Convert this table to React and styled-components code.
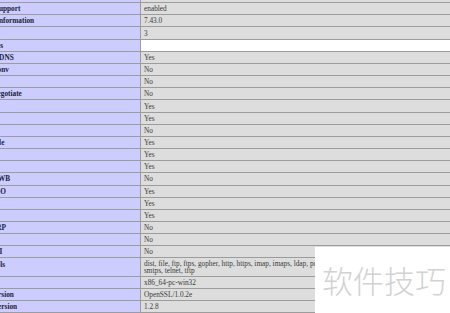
import React from 'react'
import styled, { createGlobalStyle } from 'styled-components'

const GlobalStyle = createGlobalStyle`
  html, body {
    margin: 0;
    padding: 0;
    background: #ffffff;
    overflow: hidden;
  }
  body {
    width: 450px;
    height: 313px;
    position: relative;
  }
`

const rows = [
  { label: '', value: '' },
  { label: 'cURL support', value: 'enabled' },
  { label: 'cURL Information', value: '7.43.0' },
  { label: 'Age', value: '3' },
  { label: 'Features', value: '', blank: true },
  { label: 'AsynchDNS', value: 'Yes' },
  { label: 'CharConv', value: 'No' },
  { label: 'Debug', value: 'No' },
  { label: 'GSS-Negotiate', value: 'No' },
  { label: 'IDN', value: 'Yes' },
  { label: 'IPv6', value: 'Yes' },
  { label: 'krb4', value: 'No' },
  { label: 'Largefile', value: 'Yes' },
  { label: 'libz', value: 'Yes' },
  { label: 'NTLM', value: 'Yes' },
  { label: 'NTLMWB', value: 'No' },
  { label: 'SPNEGO', value: 'Yes' },
  { label: 'SSL', value: 'Yes' },
  { label: 'SSPI', value: 'Yes' },
  { label: 'TLS-SRP', value: 'No' },
  { label: 'HTTP2', value: 'No' },
  { label: 'GSSAPI', value: 'No' },
  {
    label: 'Protocols',
    lines: [
      'dist, file, ftp, ftps, gopher, http, https, imap, imaps, ldap, pop3, pop3s, rtsp, scp, sftp, smtp,',
      'smtps, telnet, tftp',
    ],
  },
  { label: 'Host', value: 'x86_64-pc-win32' },
  { label: 'SSL Version', value: 'OpenSSL/1.0.2e' },
  { label: 'ZLib Version', value: '1.2.8' },
]

const App = () => {
  return (
    <>
      <GlobalStyle />
      <Table>
        {rows.map((r, i) => (
          <Row key={i}>
            <Label>{r.label}</Label>
            <Value blank={r.blank} multi={!!r.lines}>
              {r.lines ? r.lines.map((l, j) => <Line key={j}>{l}</Line>) : r.value}
            </Value>
          </Row>
        ))}
      </Table>
      <Watermark>软件技巧</Watermark>
    </>
  )
}
export default App

const Table = styled.div`
  margin-top: -9px;
  margin-left: -27px;
  width: calc(100% + 27px);
  display: flex;
  flex-direction: column;
  font-family: 'Liberation Serif', 'Noto Sans CJK SC', serif;
  font-size: 7.3px;
  line-height: 6px;
`

const Row = styled.div`
  display: grid;
  grid-template-columns: 168px 1fr;
  border-bottom: 1px solid #9c9c9c;
`

const Label = styled.div`
  background: #ccccff;
  border-right: 1px solid #9c9c9c;
  padding: 3.1px 3px 2.07px;
  min-height: 6px;
  font-weight: bold;
  color: #1c1c3a;
  white-space: nowrap;
  overflow: hidden;
`

const Value = styled.div`
  background: ${(props) => (props.blank ? '#ffffff' : '#dddddd')};
  padding: ${(props) => (props.multi ? '2.6px 3px 1.4px' : '3.1px 3px 2.07px')};
  min-height: 6px;
  color: #3a3a3a;
  white-space: nowrap;
  overflow: hidden;
`

const Line = styled.div`
  line-height: 6.6px;
  white-space: nowrap;
`

const Watermark = styled.div`
  position: absolute;
  left: 315px;
  top: 246.5px;
  right: 0;
  bottom: 0;
  background: #ffffff;
  padding: 17px 0 0 7px;
  font-family: 'Noto Sans CJK SC', sans-serif;
  font-size: 31px;
  line-height: 31px;
  font-weight: 300;
  color: #d2d2d2;
  white-space: nowrap;
`
